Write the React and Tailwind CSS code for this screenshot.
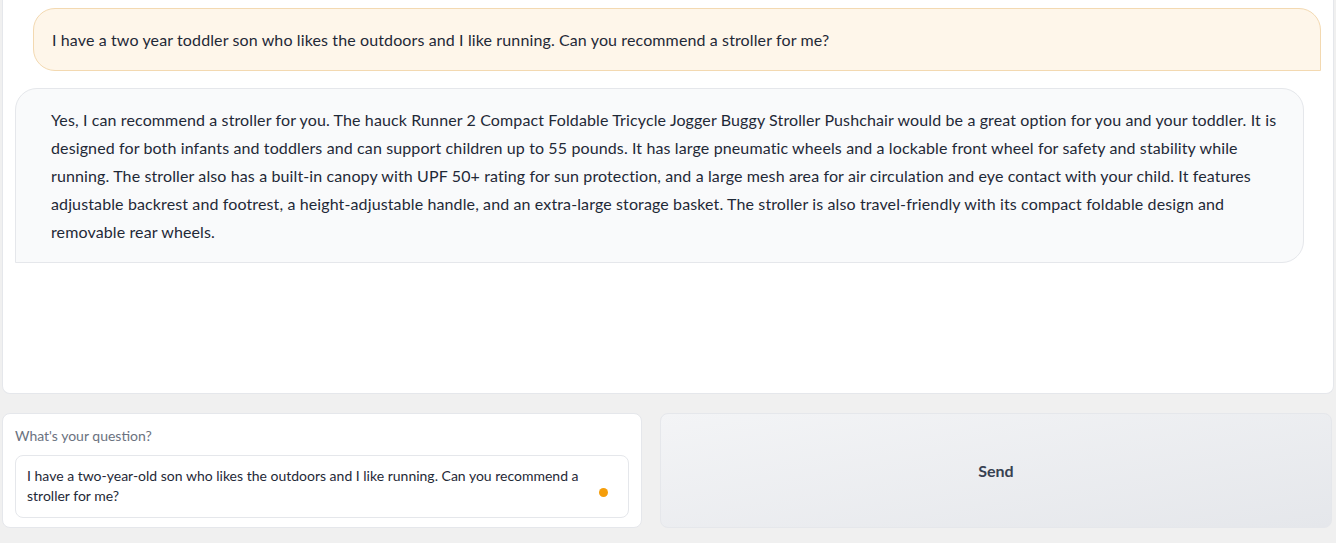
import React from "react";

const botLines = [
  "Yes, I can recommend a stroller for you. The hauck Runner 2 Compact Foldable Tricycle Jogger Buggy Stroller Pushchair would be a great option for you and your toddler. It is",
  "designed for both infants and toddlers and can support children up to 55 pounds. It has large pneumatic wheels and a lockable front wheel for safety and stability while",
  "running. The stroller also has a built-in canopy with UPF 50+ rating for sun protection, and a large mesh area for air circulation and eye contact with your child. It features",
  "adjustable backrest and footrest, a height-adjustable handle, and an extra-large storage basket. The stroller is also travel-friendly with its compact foldable design and",
  "removable rear wheels.",
];

const App = () => {
  return (
    <div className="w-[1336px] h-[556px] bg-white font-['Lato','Noto_Sans',sans-serif] text-[#1f2937]">
      <div className="h-[543px] bg-[#f0f0f0] flex flex-col">
        {/* Chat panel */}
        <div className="mx-[2px] h-[394px] bg-white rounded-b-[8px] border-x border-b border-[#e5e7eb] pt-[8px] flex flex-col gap-[17px]">
          <div className="ml-[30px] mr-[12px] bg-[#fef6ea] border border-[#f3d9b1] rounded-[22px] rounded-br-none px-[18px] pt-[17px] pb-[16px] text-[16px] leading-[28px] tracking-[0.12px]">
            I have a two year toddler son who likes the outdoors and I like running. Can you recommend a stroller for me?
          </div>
          <div className="ml-[12px] mr-[29px] bg-[#f9fafb] border border-[#e5e7eb] rounded-[22px] rounded-bl-none pl-[35px] pr-[18px] pt-[17px] pb-[16px] text-[16px] leading-[28px] tracking-[0.12px] whitespace-nowrap">
            {botLines.map((l, i) => (
              <div key={i}>{l}</div>
            ))}
          </div>
        </div>

        {/* Input row */}
        <div className="mt-[19px] mx-[2px] flex gap-[18px] h-[115px]">
          <div className="w-[640px] bg-white rounded-[8px] border border-[#e5e7eb] px-[12px] pt-[12px] flex flex-col">
            <div className="text-[14px] leading-[20px] text-[#6b7280] mb-[9px]">What's your question?</div>
            <div className="relative h-[63px] border border-[#e5e7eb] rounded-[8px] pl-[11px] pr-[40px] py-[10px] text-[14px] leading-[20px] text-[#1f2937]">
              I have a two-year-old son who likes the outdoors and I like running. Can you recommend a stroller for me?
              <span className="absolute right-[20px] top-[32px] w-[9px] h-[9px] rounded-full bg-[#f59e0b]"></span>
            </div>
          </div>
          <button className="flex-1 mr-[2px] rounded-[8px] border border-[#e5e7eb] bg-gradient-to-br from-[#f3f4f6] to-[#e5e7eb] text-[16px] font-bold text-[#374151]">
            Send
          </button>
        </div>
      </div>
    </div>
  );
};

export default App;
